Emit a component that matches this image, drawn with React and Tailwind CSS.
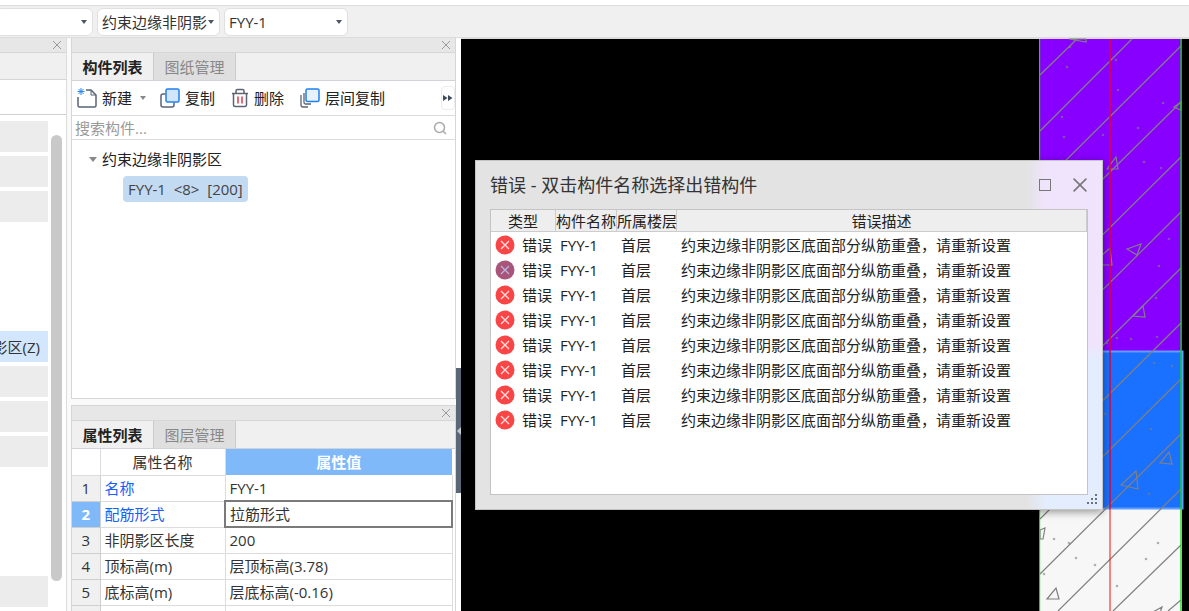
import { clsx } from 'clsx';

const FONT = "font-['Open_Sans','Noto_Sans_CJK_SC',sans-serif]";

const errors = Array.from({ length: 8 }, (_, i) => ({
  id: i,
  type: '错误',
  name: 'FYY-1',
  floor: '首层',
  text: '约束边缘非阴影区底面部分纵筋重叠，请重新设置',
  dimmed: i === 1,
}));

const properties = [
  { name: '名称', value: 'FYY-1', key: true },
  { name: '配筋形式', value: '拉筋形式', key: true, active: true },
  { name: '非阴影区长度', value: '200' },
  { name: '顶标高(m)', value: '层顶标高(3.78)' },
  { name: '底标高(m)', value: '层底标高(-0.16)' },
  { name: '', value: '' },
];

// 45° hatch of the concrete section: x1, y1, x2, y2
const hatch = [
  [1, 37, 38, 1],
  [1, 93, 93, 1],
  [1, 148, 142, 8],
  [1, 203, 142, 64],
  [1, 259, 142, 119],
  [1, 314, 142, 174],
  [1, 370, 142, 230],
  [1, 425, 142, 285],
  [1, 481, 142, 341],
  [1, 536, 142, 396],
  [19, 573, 142, 451],
  [74, 573, 142, 507],
  [129, 573, 142, 562],
];

const aggregate = [
  '30,1 47,1 47,4',
  '68,131 77,119 79,131',
  '88,211 102,206 98,217',
  '94,278 104,268 106,279',
  '60,220 71,210 73,227 60,227',
  '135,69 142,64 142,72',
  '121,425 130,414 133,426',
  '82,447 97,433 99,451',
  '8,561 17,550 20,561',
  '1,492 6,490 4,501 1,501',
  '112,575 123,569 121,575',
];

const dots = [
  [77, 22], [28, 29], [79, 52], [23, 79], [25, 99], [64, 97], [99, 90], [105, 124],
  [122, 130], [124, 65], [130, 201], [120, 228], [117, 260], [31, 9], [78, 300],
  [92, 301], [118, 299], [68, 305], [115, 325], [133, 328], [66, 376], [112, 391],
  [110, 456], [15, 501], [37, 520], [56, 527], [107, 521], [119, 505], [78, 548],
  [5, 536], [30, 505],
];

function CloseIcon({ className }) {
  return (
    <svg viewBox="0 0 10 10" className={className} fill="none" stroke="currentColor">
      <path d="M1 1l8 8M9 1l-8 8" />
    </svg>
  );
}

function Caret({ className }) {
  return (
    <svg viewBox="0 0 6 4" className={clsx('h-1 w-1.5', className)} fill="currentColor">
      <path d="M0 0h6L3 4z" />
    </svg>
  );
}

function Combo({ label, value, className }) {
  return (
    <div className={clsx('relative h-7 shrink-0', className)}>
      <select
        aria-label={label}
        className="h-full w-full appearance-none rounded-md border border-[#e0e0e0] bg-white pr-3 pl-1 text-[#333]"
      >
        <option>{value}</option>
      </select>
      <Caret className="pointer-events-none absolute top-3 right-1.5 text-[#4a5568]" />
    </div>
  );
}

function PanelBar() {
  return (
    <div className="flex h-[15px] shrink-0 items-center justify-end border-b border-[#d6d6d6] bg-[#e7e7e7] pr-1">
      <button aria-label="关闭" className="text-[#999]">
        <CloseIcon className="h-2.5 w-2.5" />
      </button>
    </div>
  );
}

function Tabs({ tabs }) {
  return (
    <div className="flex h-7 shrink-0 border-b border-[#d0d4d8] bg-[#f0f0f0]">
      {tabs.map((tab, i) => (
        <button
          key={tab}
          className={clsx(
            'w-[82px] border-r border-[#c8ccd0]',
            i === 0 ? 'font-bold text-[#222]' : 'bg-[#dfdfdf] text-[#888]'
          )}
        >
          {tab}
        </button>
      ))}
    </div>
  );
}

function NewIcon() {
  return (
    <svg viewBox="0 0 20 20" className="h-5 w-5" fill="none" stroke="#5b6475" strokeWidth="1.5">
      <path d="M9 2h5l5 5v10.5a1.5 1.5 0 0 1-1.5 1.5h-15A1.5 1.5 0 0 1 1 17.500V9" />
      <path d="M14 2v5h5" strokeWidth="1" />
      <path d="M4 0v7M.5 3.500h7M1.500 1l5 5M6.500 1l-5 5" stroke="#2f88ee" strokeWidth="1" />
    </svg>
  );
}

function CopyIcon() {
  return (
    <svg viewBox="0 0 20 20" className="h-5 w-5" fill="none" strokeWidth="1.5">
      <path d="M5.500 6H3a2 2 0 0 0-2 2v9a2 2 0 0 0 2 2h9a2 2 0 0 0 2-2v-2.500" stroke="#5b6475" />
      <rect x="6" y="1" width="13" height="13" rx="1.500" fill="#d3e5fd" stroke="#1f80f0" />
    </svg>
  );
}

function TrashIcon() {
  return (
    <svg viewBox="0 0 18 20" className="h-5 w-[18px]" fill="none" stroke="#5b6475" strokeWidth="1.5">
      <path d="M1 5.500h16M5 5V3a1.500 1.500 0 0 1 1.500-1.500h5A1.500 1.500 0 0 1 13 3v2" />
      <path d="M2.500 6v11A1.500 1.500 0 0 0 4 18.500h10a1.500 1.500 0 0 0 1.500-1.500V6" />
      <path d="M7 8.500v7M11 8.500v7" stroke="#e23b4a" />
    </svg>
  );
}

function FloorCopyIcon() {
  return (
    <svg viewBox="0 0 20 20" className="h-5 w-5" fill="none" strokeWidth="1.300">
      <path d="M1 7v10a2 2 0 0 0 2 2h5M4 5v9.500A1.500 1.500 0 0 0 5.500 16H11" stroke="#5b6475" />
      <rect x="6" y="1" width="13" height="12.500" rx="1.500" fill="#e8f1fe" stroke="#1f80f0" strokeWidth="1.500" />
    </svg>
  );
}

function ToolButton({ icon, children }) {
  return (
    <button className="flex shrink-0 items-center gap-[5px] text-[#222]">
      {icon}
      {children}
    </button>
  );
}

function ListBlock() {
  return <div className="h-[31px] shrink-0 bg-[#ececec]" />;
}

function Sidebar() {
  return (
    <aside className="flex w-[67px] shrink-0 flex-col border-r border-[#dcdcdc] bg-white">
      <PanelBar />
      <div className="h-[27px] shrink-0 border-b border-[#d6d6d6] bg-[#f0f0f0]" />
      <div className="h-[35px] shrink-0 border-b border-[#d0d0d0]" />
      <div className="flex min-h-0 flex-1">
        <div className="flex w-12 flex-col gap-1 pt-1.5">
          <ListBlock />
          <ListBlock />
          <ListBlock />
          <button className="mt-[105px] flex h-[31px] shrink-0 items-center justify-end overflow-hidden bg-[#d2e6fd] pr-2 whitespace-nowrap text-[#333]">
            影区(Z)
          </button>
          <ListBlock />
          <ListBlock />
          <ListBlock />
          <div className="mt-[105px] h-[31px] shrink-0 bg-[#ececec]" />
        </div>
        <div className="mt-5 mb-[30px] ml-[3px] w-[11px] rounded-full bg-[#c9c9c9]" />
      </div>
    </aside>
  );
}

function ComponentPanel() {
  return (
    <section className="flex h-[361px] shrink-0 flex-col border border-t-0 border-[#d6d6d6] bg-white">
      <PanelBar />
      <Tabs tabs={['构件列表', '图纸管理']} />
      <div className="flex h-[35px] shrink-0 items-center border-b border-[#dcdcdc] pl-[5px]">
        <ToolButton icon={<NewIcon />}>新建</ToolButton>
        <Caret className="mx-2 text-[#888]" />
        <div className="flex gap-4 pl-1.5">
          <ToolButton icon={<CopyIcon />}>复制</ToolButton>
          <ToolButton icon={<TrashIcon />}>删除</ToolButton>
          <ToolButton icon={<FloorCopyIcon />}>层间复制</ToolButton>
        </div>
        <button aria-label="更多" className="ml-auto flex h-6 w-3.5 items-center justify-center rounded border border-[#ececec] text-[#3d4a5c]">
          <svg viewBox="0 0 10 6" className="h-1.5 w-2.5 shrink-0" fill="currentColor">
            <path d="M0 0l4.500 3L0 6zM5 0l4.500 3L5 6z" />
          </svg>
        </button>
      </div>
      <label className="flex h-6 shrink-0 items-center border-b border-[#dcdcdc] pr-2 pl-[3px]">
        <input
          aria-label="搜索构件"
          placeholder="搜索构件..."
          className="min-w-0 flex-1 outline-none placeholder:text-[#999]"
        />
        <svg viewBox="0 0 14 14" className="h-3.5 w-3.5" fill="none" stroke="#aaa" strokeWidth="1.500">
          <circle cx="6.500" cy="6.500" r="5" />
          <path d="M10 10l3 3" />
        </svg>
      </label>
      <div className="pt-[7px] pl-[17px]">
        <div className="flex h-6 items-center gap-[5px] text-[#222]">
          <svg viewBox="0 0 8 5" className="h-[5px] w-2 text-[#888]" fill="currentColor">
            <path d="M0 0h8L4 5z" />
          </svg>
          约束边缘非阴影区
        </div>
        <button className="mt-[5px] ml-[34px] h-[26px] rounded-sm bg-[#c3daf3] px-[5px] whitespace-pre text-[#444]">
          {'FYY-1  <8>  [200]'}
        </button>
      </div>
    </section>
  );
}

function PropertyPanel() {
  return (
    <section className="flex min-h-0 flex-1 flex-col overflow-hidden border border-b-0 border-[#d6d6d6] bg-white">
      <PanelBar />
      <Tabs tabs={['属性列表', '图层管理']} />
      <table className="mr-0.5 table-fixed border-collapse text-left text-[#333]">
        <colgroup>
          <col className="w-7" />
          <col className="w-[125px]" />
          <col />
        </colgroup>
        <thead>
          <tr className="h-[26px]">
            <th className="border-r border-b border-[#dcdcdc]" />
            <th className="border-r border-b border-[#dcdcdc] p-0 text-center font-normal">属性名称</th>
            <th className="bg-[#80b9f9] p-0 text-center font-bold text-white">属性值</th>
          </tr>
        </thead>
        <tbody>
          {properties.map((row, i) => (
            <tr key={i} className="h-[26px]">
              <td
                className={clsx(
                  'border-r border-b border-[#cfcfcf] p-0 text-center',
                  row.active ? 'bg-[#80b9f9] font-bold text-white' : 'bg-[#f0f0f0]'
                )}
              >
                {row.name && i + 1}
              </td>
              <td className={clsx('border-r border-b border-[#dcdcdc] p-0 pl-1', row.key && 'text-[#1560f5]')}>
                {row.name}
              </td>
              <td
                className={clsx(
                  'p-0 pl-1',
                  row.active ? 'border-2 border-[#7a7a7a]' : 'border-r border-b border-[#dcdcdc]'
                )}
              >
                {row.value}
              </td>
            </tr>
          ))}
        </tbody>
      </table>
    </section>
  );
}

function SectionDrawing() {
  return (
    <svg viewBox="0 0 150 573" className="absolute top-0 right-0 h-[573px] w-[150px]">
      <rect x="0" y="1" width="143" height="312" fill="#8800ff" />
      <rect x="0" y="313" width="143" height="158" fill="#1a70ff" />
      <rect x="0" y="471" width="143" height="102" fill="#f7f7f7" />
      <path d="M0 313.500h143.500v157H0" fill="none" stroke="#5f9dff" strokeWidth="2" />
      <g fill="none" stroke="#808080" strokeWidth="1.200">
        {hatch.map(([x1, y1, x2, y2]) => (
          <line key={y2 + x2} x1={x1} y1={y1} x2={x2} y2={y2} />
        ))}
        {aggregate.map((points) => (
          <polygon key={points} points={points} />
        ))}
      </g>
      <g fill="#808080" opacity="0.6">
        {dots.map(([x, y]) => (
          <circle key={`${x}-${y}`} cx={x} cy={y} r="1.300" />
        ))}
      </g>
      <path d="M71 1v470" stroke="#e8002c" strokeWidth="2" opacity="0.7" />
      <path d="M71 471v102" stroke="#ff2020" strokeWidth="2" opacity="0.55" />
      <path d="M.5 1v572M142 1v572" stroke="#12d812" strokeWidth="1.300" />
    </svg>
  );
}

function ErrorIcon({ dimmed }) {
  return (
    <svg viewBox="0 0 20 20" className="h-5 w-5 shrink-0">
      <circle cx="10" cy="10" r="9.500" fill={dimmed ? '#a9557a' : '#f94545'} />
      <path d="M6 6l8 8M14 6l-8 8" stroke={dimmed ? '#b9b6de' : '#ffdede'} strokeWidth="1.300" />
    </svg>
  );
}

function ErrorDialog() {
  return (
    <div
      role="dialog"
      className="absolute top-[122px] left-3.5 flex w-[628px] flex-col border border-[#c4c4c4] bg-[linear-gradient(90deg,#e3e3e3_88%,transparent_91%),linear-gradient(180deg,#f0e4fd_53%,#e3edfd_57%)] px-3.5 pb-3.5 shadow-[0_2px_8px_rgba(0,0,0,0.4)]"
    >
      <div className="flex h-12 items-center">
        <h2 className="text-[18px] text-[#333]">错误 - 双击构件名称选择出错构件</h2>
        <div className="ml-auto flex items-center gap-5 text-[#777]">
          <button aria-label="最大化">
            <svg viewBox="0 0 14 14" className="h-3.5 w-3.5" fill="none" stroke="currentColor">
              <rect x="1.500" y="1.500" width="11" height="11" />
            </svg>
          </button>
          <button aria-label="关闭">
            <CloseIcon className="h-4 w-4" />
          </button>
        </div>
      </div>
      <div className="h-[286px] border border-[#c4c4c4] bg-white">
        <table className="w-full table-fixed border-separate border-spacing-0 text-left whitespace-nowrap text-[#222]">
          <thead>
            <tr className="h-[22px] bg-[#eeeeee] leading-5">
              <th className="w-[65px] border-r border-b border-[#ccc] p-0 text-center font-normal">类型</th>
              <th className="w-[61px] border-r border-b border-[#ccc] p-0 font-normal">构件名称</th>
              <th className="w-[60px] border-r border-b border-[#ccc] p-0 font-normal">所属楼层</th>
              <th className="border-r border-b border-[#ccc] p-0 text-center font-normal">错误描述</th>
            </tr>
          </thead>
          <tbody>
            {errors.map((row) => (
              <tr key={row.id} className="h-[25px]">
                <td className="p-0 pl-1">
                  <div className="flex items-center gap-[7px]">
                    <ErrorIcon dimmed={row.dimmed} />
                    {row.type}
                  </div>
                </td>
                <td className="p-0 pl-1">{row.name}</td>
                <td className="p-0 pl-1">{row.floor}</td>
                <td className="p-0 pl-1">{row.text}</td>
              </tr>
            ))}
          </tbody>
        </table>
      </div>
      <svg viewBox="0 0 11 11" className="absolute right-1 bottom-1 h-[11px] w-[11px]" fill="#6b7280">
        <path d="M8 0h2v2H8zM8 4h2v2H8zM4 4h2v2H4zM8 8h2v2H8zM4 8h2v2H4zM0 8h2v2H0z" />
      </svg>
    </div>
  );
}

export default function App() {
  return (
    <div className={clsx('flex h-screen flex-col overflow-hidden bg-[#f0f0f0] text-[15px] leading-[22px]', FONT)}>
      <header className="shrink-0 border-t-[5px] border-white">
        <div className="flex h-[33px] items-center gap-1 border-t border-b border-[#dcdcdc]">
          <Combo label="类别" value="" className="-ml-1 w-[97px]" />
          <Combo label="构件类型" value="约束边缘非阴影" className="w-[123px]" />
          <Combo label="构件" value="FYY-1" className="w-[124px]" />
        </div>
      </header>
      <main className="flex min-h-0 flex-1">
        <Sidebar />
        <div className="flex w-[389px] shrink-0 flex-col gap-1.5 bg-[#fafafa] pl-1">
          <ComponentPanel />
          <PropertyPanel />
        </div>
        <div className="flex w-[5px] shrink-0 flex-col bg-white">
          <button aria-label="收起" className="mt-[330px] flex h-[125px] items-center justify-center bg-[#5a6675] text-[#c3c9d1]">
            <svg viewBox="0 0 4 8" className="h-2 w-1" fill="currentColor">
              <path d="M4 0v8L0 4z" />
            </svg>
          </button>
        </div>
        <div className="relative min-w-0 flex-1 overflow-hidden bg-black">
          <div className="h-px bg-[#dcdcdc]" />
          <SectionDrawing />
          <ErrorDialog />
        </div>
      </main>
    </div>
  );
}
